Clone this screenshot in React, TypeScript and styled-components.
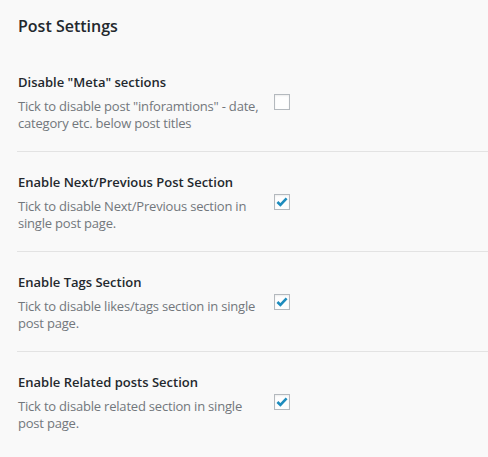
import React from "react";
import styled, { createGlobalStyle } from "styled-components";

const Global = createGlobalStyle`
  html, body { margin: 0; padding: 0; background: #f9f9f9; }
  body { font-family: "Open Sans", "Noto Sans", sans-serif; color: #23282d; }
`;

const Page = styled.div`
  width: 488px;
  height: 457px;
  overflow: hidden;
  background: #f9f9f9;
  padding-left: 18px;
  box-sizing: border-box;
`;

const Title = styled.h2`
  margin: 0;
  padding-top: 14px;
  font-size: 16px;
  line-height: 24px;
  font-weight: 600;
  color: #23282d;
`;

const List = styled.div`
  margin-top: 35px;
`;

const Row = styled.div<{ $first?: boolean }>`
  display: grid;
  grid-template-columns: 246px 16px;
  column-gap: 10px;
  align-items: start;
  padding: ${(p) => (p.$first ? "0" : "21px")} 0 19px 1px;
  border-top: ${(p) => (p.$first ? "none" : "1px solid #e3e3e3")};
  margin-left: -1px;
`;

const Text = styled.div``;

const Heading = styled.div`
  font-size: 13px;
  line-height: 18px;
  font-weight: 600;
  color: #23282d;
`;

const Desc = styled.div`
  margin-top: 7px;
  font-size: 13px;
  line-height: 17px;
  color: #72777c;
  letter-spacing: -0.2px;
`;

const Box = styled.span`
  margin-top: 21px;
  width: 16px;
  height: 16px;
  box-sizing: border-box;
  border: 1px solid #b4b9be;
  background: #fefefe;
  box-shadow: inset 0 1px 2px rgba(0, 0, 0, 0.07);
  display: flex;
  align-items: center;
  justify-content: center;
`;

const Check = () => (
  <svg width="14" height="14" viewBox="0 0 14 14">
    <path d="M2.4 7.0 L5.4 10.0 L11.6 3.4" fill="none" stroke="#1e8cbe" strokeWidth="2.6" />
  </svg>
);

const items = [
  { h: 'Disable "Meta" sections', d: 'Tick to disable post "inforamtions" - date, category etc. below post titles', c: false },
  { h: "Enable Next/Previous Post Section", d: "Tick to disable Next/Previous section in single post page.", c: true },
  { h: "Enable Tags Section", d: "Tick to disable likes/tags section in single post page.", c: true },
  { h: "Enable Related posts Section", d: "Tick to disable related section in single post page.", c: true },
];

export default function App() {
  return (
    <Page>
      <Global />
      <Title>Post Settings</Title>
      <List>
        {items.map((it, i) => (
          <Row key={i} $first={i === 0}>
            <Text>
              <Heading>{it.h}</Heading>
              <Desc>{it.d}</Desc>
            </Text>
            <Box>{it.c && <Check />}</Box>
          </Row>
        ))}
      </List>
    </Page>
  );
}
